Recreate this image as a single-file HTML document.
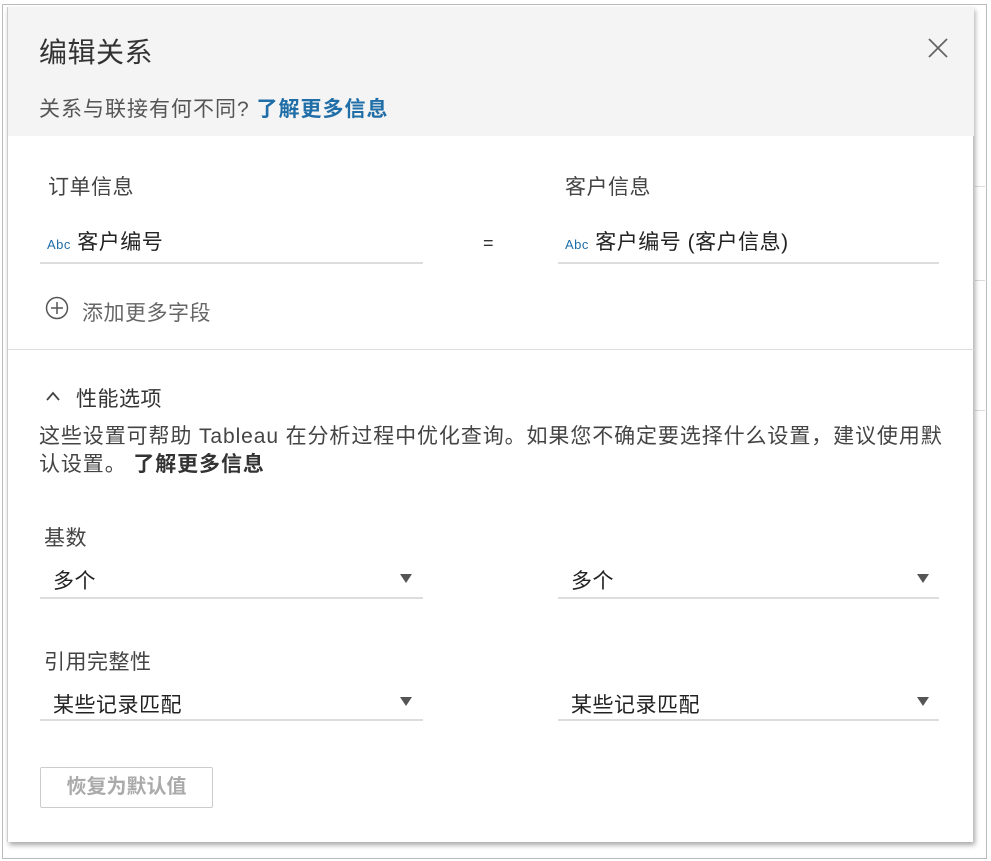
<!DOCTYPE html>
<html><head><meta charset="utf-8"><style>
*{margin:0;padding:0;box-sizing:border-box}
body{width:991px;height:861px;background:#fff;position:relative;overflow:hidden;font-family:"Liberation Sans","Noto Sans CJK SC",sans-serif;color:#333}
.frame{position:absolute;left:2px;top:4px;width:985px;height:855px;border:1px solid #bbb}
.side{position:absolute;left:975px;width:10px;border-top:1px solid #ddd}
.dlg{position:absolute;left:7px;top:7px;width:966px;height:835px;background:#fff;box-shadow:2px 3px 5px rgba(0,0,0,.35);border-left:1px solid #ccc}
.hdr{position:absolute;left:0;top:0;width:966px;height:129px;background:#f4f4f4}
.t{position:absolute;white-space:nowrap;font-size:20px;letter-spacing:0.5px}
.line{position:absolute;height:2px;background:#ddd}
.arr{position:absolute;width:0;height:0;border-left:6px solid transparent;border-right:6px solid transparent;border-top:9px solid #555}
</style></head><body>
<div class="frame"></div>
<div class="side" style="top:186px"></div><div class="side" style="top:280px"></div><div class="side" style="top:410px"></div>
<div class="dlg">
<div class="hdr"></div>
<div class="t" style="left:31px;top:24px;font-size:28px;color:#333">编辑关系</div>
<svg style="position:absolute;left:920px;top:31px" width="20" height="20"><path d="M1 1L19 19M19 1L1 19" stroke="#666" stroke-width="1.8"/></svg>
<div class="t" style="left:31px;top:86px;font-size:21px;letter-spacing:1px;color:#555">关系与联接有何不同? <b style="color:#1f6ea8">了解更多信息</b></div>
<div class="t" style="left:40px;top:164px;font-size:21px;color:#444">订单信息</div>
<div class="t" style="left:557px;top:164px;font-size:21px;color:#444">客户信息</div>
<div class="t" style="left:39px;top:219px;font-size:21px;color:#222"><span style="font-size:13px;color:#1f6ea8">Abc</span> 客户编号</div>
<div class="t" style="left:475px;top:226px;font-size:18px;color:#333">=</div>
<div class="t" style="left:557px;top:219px;font-size:21px;color:#222"><span style="font-size:13px;color:#1f6ea8">Abc</span> 客户编号 (客户信息)</div>
<div class="line" style="left:32px;top:255px;width:383px"></div>
<div class="line" style="left:550px;top:255px;width:381px"></div>
<svg style="position:absolute;left:37px;top:289px" width="24" height="24"><circle cx="12" cy="12" r="10.5" fill="none" stroke="#555" stroke-width="1.5"/><path d="M12 6V18M6 12H18" stroke="#555" stroke-width="1.5"/></svg>
<div class="t" style="left:74px;top:290px;font-size:21px;color:#666">添加更多字段</div>
<div class="line" style="left:0;top:342px;width:966px;height:1px"></div>
<svg style="position:absolute;left:37px;top:383px" width="16" height="12"><path d="M2 10L8 3L14 10" fill="none" stroke="#444" stroke-width="1.8"/></svg>
<div class="t" style="left:68px;top:376px;font-size:21px;color:#333">性能选项</div>
<div class="t" style="left:31px;top:416px;font-size:21px;letter-spacing:0.9px;color:#444;line-height:28px">这些设置可帮助 Tableau 在分析过程中优化查询。如果您不确定要选择什么设置，建议使用默<br>认设置。 <b style="color:#333">了解更多信息</b></div>
<div class="t" style="left:36px;top:515px;font-size:21px;color:#444">基数</div>
<div class="t" style="left:45px;top:558px;font-size:21px;color:#222">多个</div>
<div class="arr" style="left:392px;top:567px"></div>
<div class="line" style="left:32px;top:590px;width:383px"></div>
<div class="t" style="left:563px;top:558px;font-size:21px;color:#222">多个</div>
<div class="arr" style="left:909px;top:567px"></div>
<div class="line" style="left:550px;top:590px;width:381px"></div>
<div class="t" style="left:36px;top:639px;font-size:21px;color:#444">引用完整性</div>
<div class="t" style="left:45px;top:682px;font-size:21px;color:#222">某些记录匹配</div>
<div class="arr" style="left:392px;top:690px"></div>
<div class="line" style="left:32px;top:712px;width:383px"></div>
<div class="t" style="left:563px;top:682px;font-size:21px;color:#222">某些记录匹配</div>
<div class="arr" style="left:909px;top:690px"></div>
<div class="line" style="left:550px;top:712px;width:381px"></div>
<div style="position:absolute;left:32px;top:760px;width:173px;height:41px;border:1px solid #ccc;border-radius:2px;font-size:20px;color:#aaa;text-align:center;line-height:39px;font-weight:bold">恢复为默认值</div>
</div>
</body></html>
